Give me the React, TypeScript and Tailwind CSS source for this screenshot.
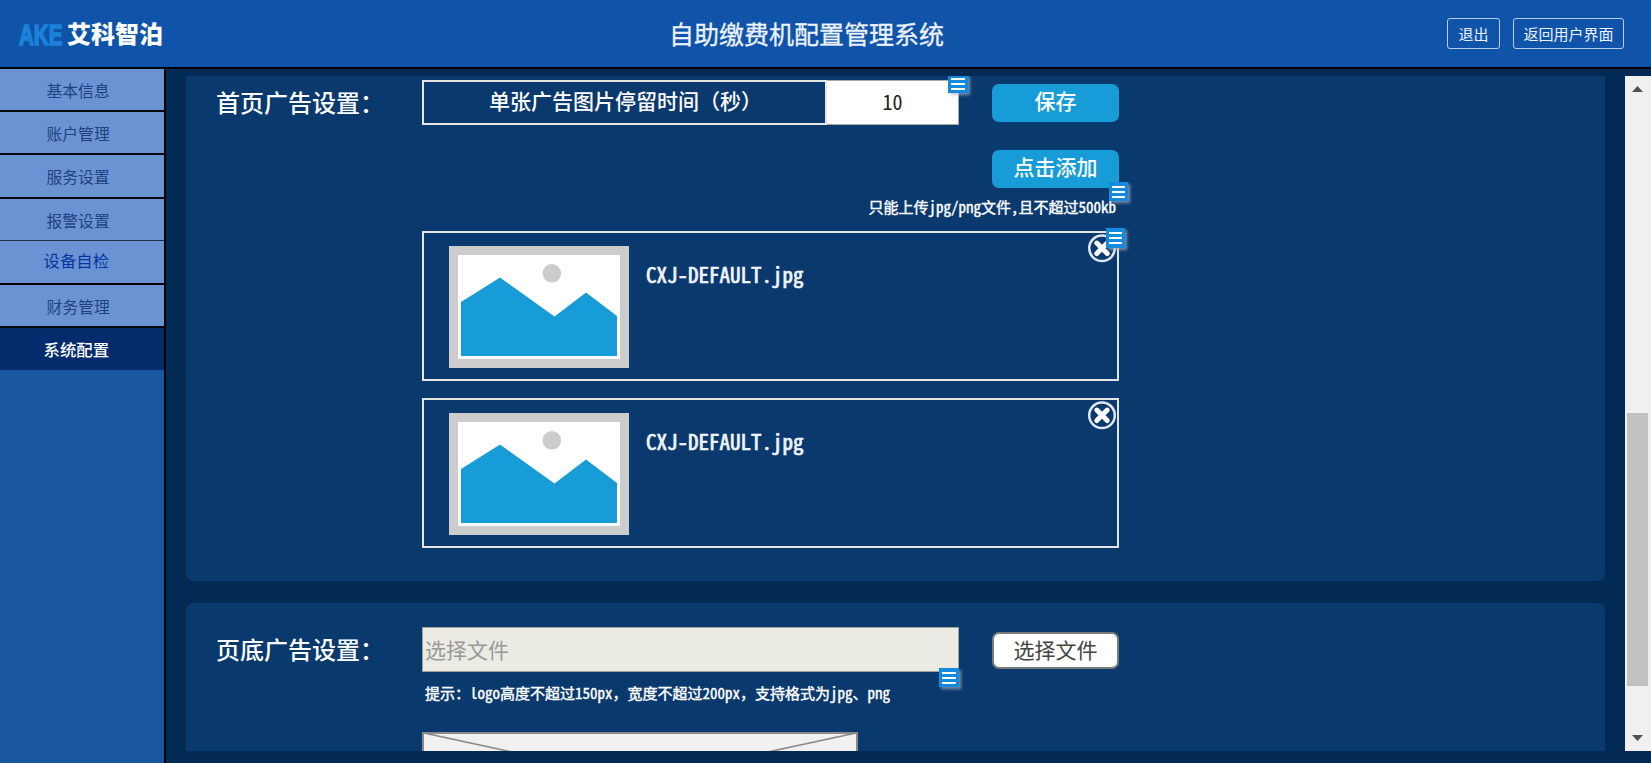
import React from "react";

const mono = "font-['Noto_Sans_Mono_CJK_SC','Noto_Sans_CJK_SC',sans-serif]";

type NavItem = { label: string; box: string; text: string };

const navItems: NavItem[] = [
  { label: "基本信息", box: "h-[43px] border-b-2 border-[#05080f] bg-[#6b93d3]", text: "ml-[46.5px] mt-[2px] text-[15.8px] text-[#1d427f]" },
  { label: "账户管理", box: "h-[43px] border-b-2 border-[#05080f] bg-[#6b93d3]", text: "ml-[46.5px] mt-[2px] text-[15.8px] text-[#1d427f]" },
  { label: "服务设置", box: "h-[44px] border-b-2 border-[#05080f] bg-[#6b93d3]", text: "ml-[46.5px] mt-px text-[15.8px] text-[#1d427f]" },
  { label: "报警设置", box: "h-[42px] border-b border-[#1f2c44] bg-[#6b93d3]", text: "ml-[46.5px] mt-[2px] text-[15.8px] text-[#1d427f]" },
  { label: "设备自检", box: "h-[44px] border-b-2 border-black bg-[#6b93d3]", text: "ml-[43.5px] -mt-[4px] text-[16.4px] text-[#0435a0]" },
  { label: "财务管理", box: "h-[43px] border-b-2 border-[#05080f] bg-[#6b93d3]", text: "ml-[46.5px] mt-[2px] text-[15.8px] text-[#1d427f]" },
  { label: "系统配置", box: "h-[42px] bg-[#042c6c]", text: "ml-[43.5px] text-[16.4px] font-medium text-white" },
];

function MenuMark({ className }: { className: string }) {
  return (
    <div className={`absolute z-10 flex flex-col gap-[3px] bg-[#148ade] px-[3px] pt-[4px] shadow-[2px_2px_3px_rgba(170,180,195,0.7)] ${className}`}>
      <i className="block h-[2px] bg-white" />
      <i className="block h-[2px] bg-white" />
      <i className="block h-[2px] bg-white" />
    </div>
  );
}

function Picture() {
  return (
    <svg width="180" height="122" viewBox="0 0 180 122" className="shrink-0">
      <rect width="180" height="122" fill="#cccccc" />
      <rect x="9" y="9" width="162" height="104" fill="#fff" />
      <circle cx="102.8" cy="27.3" r="9.3" fill="#cccccc" />
      <path d="M12 56 L51 31.5 L105.5 70.5 L137 46.5 L168 70 V110 H12Z" fill="#189cd8" />
    </svg>
  );
}

function FileCard({ marked }: { marked?: boolean }) {
  return (
    <div className="relative flex h-[150px] w-[697px] border-2 border-[#e4e4e4] pl-[25px] pt-[13px]">
      <Picture />
      <span className={`ml-[17px] mt-[13px] h-[30px] text-[21px] leading-[30px] text-[#f1f5fa] [-webkit-text-stroke:0.7px_#f1f5fa] ${mono}`}>
        CXJ-DEFAULT.jpg
      </span>
      <svg className="absolute right-0 top-0" width="30" height="30" viewBox="0 0 30 30">
        <circle cx="15" cy="15.3" r="12.8" fill="none" stroke="#dfe6f0" strokeWidth="2.5" />
        <path d="M9.8 10.1 L20.2 20.5 M20.2 10.1 L9.8 20.5" stroke="#fff" strokeWidth="5" strokeLinecap="round" />
      </svg>
      {marked && <MenuMark className="-top-[5px] right-[-8px] h-[20px] w-[19px]" />}
    </div>
  );
}

export default function App() {
  return (
    <div className="flex h-[763px] w-[1651px] flex-col overflow-hidden bg-[#022a54] font-['Noto_Sans_CJK_SC',sans-serif]">
      <header className="flex h-[69px] shrink-0 border-b-2 border-black bg-[#1054a9]">
        <div className="ml-[19px] flex w-[650px] items-start pt-[19px]">
          <span className="h-[30px] w-[48px] origin-left scale-x-[0.71] whitespace-nowrap text-[29px] leading-[32px] font-bold text-[#1b82d9] [-webkit-text-stroke:1.6px_#1b82d9] font-['Liberation_Sans',sans-serif]">
            AKE
          </span>
          <span className="h-[30px] whitespace-nowrap text-[24px] leading-[28px] font-black text-white">艾科智泊</span>
        </div>
        <h1 className="mt-[15px] w-[778px] whitespace-nowrap text-[25px] leading-[36px] font-normal text-[#edf3fc] [-webkit-text-stroke:0.3px_#edf3fc]">自助缴费机配置管理系统</h1>
        <div className="mt-[18px] flex gap-[13px]">
          <button className="h-[31px] w-[53px] whitespace-nowrap rounded-[3px] border border-[#b9cde9] text-[15px] leading-[29px] text-[#edf3fc]">退出</button>
          <button className="h-[31px] w-[111px] whitespace-nowrap rounded-[3px] border border-[#b9cde9] text-[15px] leading-[29px] text-[#edf3fc]">返回用户界面</button>
        </div>
      </header>

      <div className="flex h-[694px]">
        <nav className="w-[166px] shrink-0 border-r-2 border-black bg-[#1957a0]">
          {navItems.map((n) => (
            <div key={n.label} className={`flex items-center ${n.box}`}>
              <span className={`whitespace-nowrap leading-6 ${n.text}`}>{n.label}</span>
            </div>
          ))}
        </nav>

        <main className="mt-[7px] flex h-[675px] flex-1 overflow-hidden pl-5">
          <div className="flex w-[1419px] flex-col gap-[22px]">
            <section className="flex h-[505px] shrink-0 rounded-b-[7px] bg-[#0a396d] pl-[30px]">
              <h2 className="mt-[8px] w-[206px] whitespace-nowrap text-[24px] leading-[36px] font-medium text-white">首页广告设置：</h2>
              <div className="w-[697px] pt-[4px]">
                <div className="flex">
                  <div className="relative flex h-[45px] w-[537px]">
                    <div className="w-[405px] whitespace-nowrap border-2 border-[#e4e4e4] pl-[65px] text-[21px] leading-[37px] font-medium text-white">
                      单张广告图片停留时间（秒）
                    </div>
                    <div className={`flex-1 border border-l-0 border-[#a9a9a9] bg-white text-center text-[20px] leading-[42px] text-[#222] ${mono}`}>10</div>
                    <MenuMark className="-top-[6px] right-[-9px] h-[19px] w-5" />
                  </div>
                  <button className="ml-[33px] mt-[4px] h-[38px] w-[127px] rounded-[7px] bg-[#189cd8] pb-[5px] text-[21px] leading-[33px] font-medium text-white">保存</button>
                </div>
                <div className="relative mt-[25px] flex justify-end">
                  <button className="h-[38px] w-[127px] rounded-[7px] bg-[#189cd8] pb-[5px] text-[21px] leading-[33px] font-medium text-white">点击添加</button>
                  <MenuMark className="top-[32px] right-[-9px] h-[19px] w-[19px]" />
                </div>
                <p className={`mt-[8px] h-[22px] whitespace-nowrap pr-[3px] text-right text-[15px] leading-[21px] text-white [-webkit-text-stroke:0.4px_#ffffff] ${mono}`}>
                  只能上传jpg/png文件,且不超过500kb
                </p>
                <div className="mt-[13px] flex flex-col gap-[17px]">
                  <FileCard marked />
                  <FileCard />
                </div>
              </div>
            </section>

            <section className="flex h-[300px] shrink-0 rounded-t-[7px] bg-[#0a396d] pl-[30px]">
              <h2 className="mt-[28px] w-[206px] whitespace-nowrap text-[24px] leading-[36px] font-medium text-white">页底广告设置：</h2>
              <div className="w-[697px] pt-[24px]">
                <div className="flex">
                  <div className="relative h-[45px] w-[537px] border border-[#a0a0a0] bg-[#ebebe3] pl-[2px] text-[21px] leading-[42px] text-[#999]">
                    选择文件
                    <MenuMark className="-bottom-[16px] -right-px h-[19px] w-5" />
                  </div>
                  <button className="ml-[33px] mt-[5px] h-[37px] w-[127px] rounded-[7px] border-2 border-[#7a7a7a] bg-white pb-[2px] text-[21px] leading-[31px] text-[#444]">选择文件</button>
                </div>
                <p className={`ml-[3px] mt-[10px] h-[22px] whitespace-nowrap text-[15px] leading-[22px] text-white [-webkit-text-stroke:0.4px_#ffffff] ${mono}`}>
                  提示：logo高度不超过150px，宽度不超过200px，支持格式为jpg、png
                </p>
                <div className="mt-[28px] h-[95px] w-[436px] border-2 border-[#8a8a8a] bg-[#f1f1f1]">
                  <svg width="432" height="91" viewBox="0 0 432 91">
                    <path d="M0 -1 L432 92 M432 -1 L0 92" stroke="#8a8a8a" strokeWidth="1.6" />
                  </svg>
                </div>
              </div>
            </section>
          </div>

          <div className="ml-5 flex w-[26px] flex-col items-center bg-[#f0f0f0]">
            <svg className="mr-px" width="11" height="16" viewBox="0 0 11 16">
              <path d="M5.5 10 L11 16 H0Z" fill="#505050" />
            </svg>
            <div className="mr-[2px] mt-[321px] h-[273px] w-[21px] bg-[#c1c1c1]" />
            <svg className="mr-px mt-[49px]" width="11" height="6" viewBox="0 0 11 6">
              <path d="M0 0 H11 L5.5 6Z" fill="#505050" />
            </svg>
          </div>
        </main>
      </div>
    </div>
  );
}
